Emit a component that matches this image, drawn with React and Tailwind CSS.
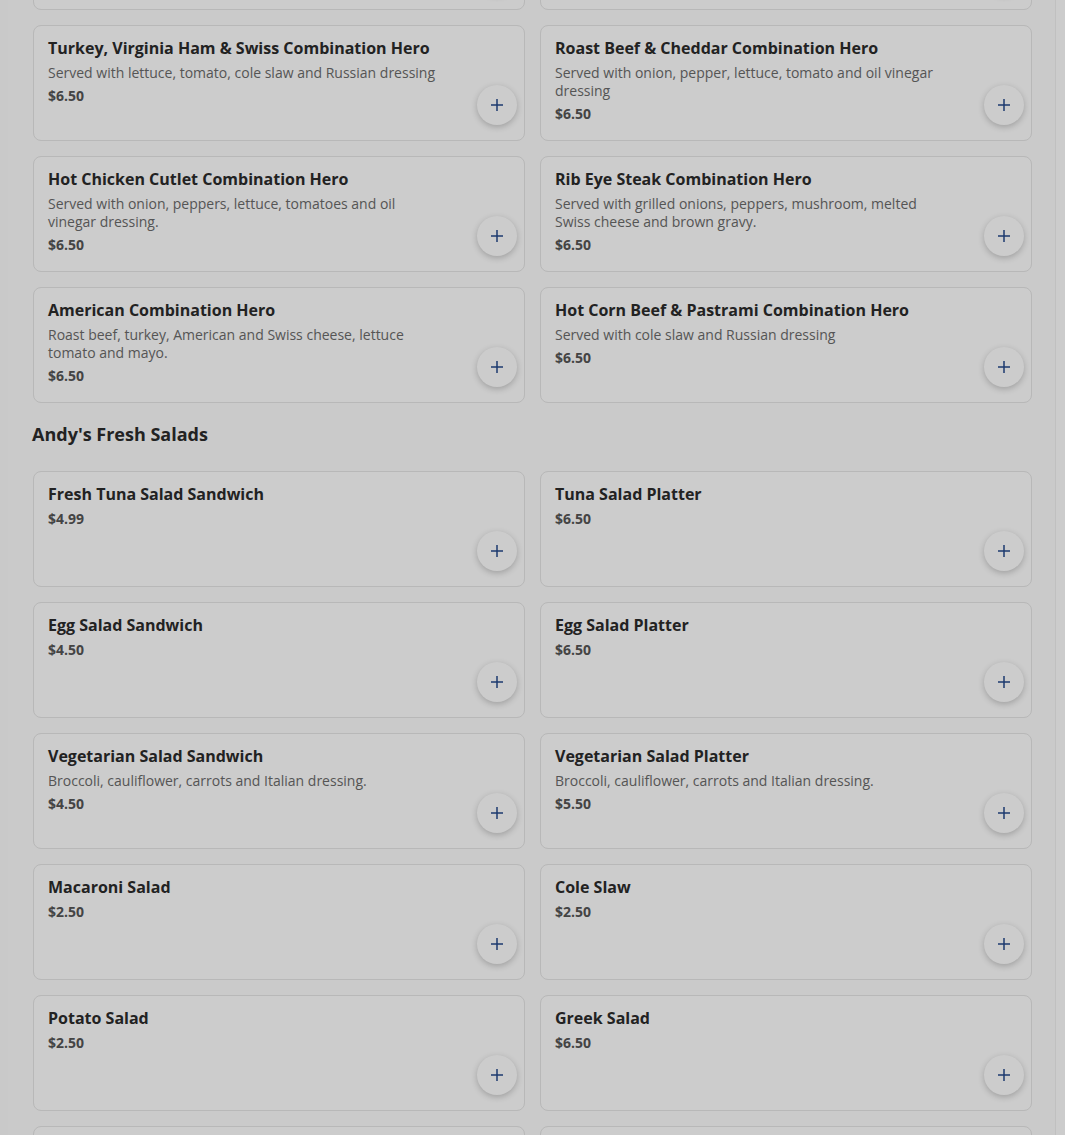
import React from "react";

const heroes = [
  { name: "Turkey, Virginia Ham & Swiss Combination Hero", desc: "Served with lettuce, tomato, cole slaw and Russian dressing", price: "$6.50" },
  { name: "Roast Beef & Cheddar Combination Hero", desc: "Served with onion, pepper, lettuce, tomato and oil vinegar dressing", price: "$6.50" },
  { name: "Hot Chicken Cutlet Combination Hero", desc: "Served with onion, peppers, lettuce, tomatoes and oil vinegar dressing.", price: "$6.50" },
  { name: "Rib Eye Steak Combination Hero", desc: "Served with grilled onions, peppers, mushroom, melted Swiss cheese and brown gravy.", price: "$6.50" },
  { name: "American Combination Hero", desc: "Roast beef, turkey, American and Swiss cheese, lettuce tomato and mayo.", price: "$6.50" },
  { name: "Hot Corn Beef & Pastrami Combination Hero", desc: "Served with cole slaw and Russian dressing", price: "$6.50" },
];

const salads = [
  { name: "Fresh Tuna Salad Sandwich", price: "$4.99" },
  { name: "Tuna Salad Platter", price: "$6.50" },
  { name: "Egg Salad Sandwich", price: "$4.50" },
  { name: "Egg Salad Platter", price: "$6.50" },
  { name: "Vegetarian Salad Sandwich", desc: "Broccoli, cauliflower, carrots and Italian dressing.", price: "$4.50" },
  { name: "Vegetarian Salad Platter", desc: "Broccoli, cauliflower, carrots and Italian dressing.", price: "$5.50" },
  { name: "Macaroni Salad", price: "$2.50" },
  { name: "Cole Slaw", price: "$2.50" },
  { name: "Potato Salad", price: "$2.50" },
  { name: "Greek Salad", price: "$6.50" },
  { name: "", price: "" },
  { name: "", price: "" },
];

function PlusButton() {
  return (
    <div className="absolute right-[7px] bottom-[15px] w-[40px] h-[40px] rounded-full bg-white shadow-[0_2px_6px_rgba(0,0,0,0.22)] flex items-center justify-center">
      <svg width="14" height="14" viewBox="0 0 14 14" fill="none">
        <path d="M7 1v12M1 7h12" stroke="#24498c" strokeWidth="1.5" />
      </svg>
    </div>
  );
}

function Card({ item }) {
  return (
    <div className="relative h-[116px] rounded-[8px] border border-[#e6e6e6] bg-white pl-[14px] pt-[9px]">
      {item.name && (
        <div className="max-w-[395px]">
          <div className="text-[16px] leading-[26px] font-bold text-[#2b2b2b]">{item.name}</div>
          {item.desc && (
            <div className="text-[14px] leading-[18px] text-[#6b6b6b] mt-[3px]">{item.desc}</div>
          )}
          <div className={`text-[14px] leading-[18px] font-bold text-[#555] ${item.desc ? "mt-[5px]" : "mt-[3px]"}`}>{item.price}</div>
        </div>
      )}
      <PlusButton />
    </div>
  );
}

export default function App() {
  return (
    <div className="relative w-[1065px] h-[1135px] overflow-hidden bg-white" style={{ fontFamily: '"Open Sans", "Noto Sans", sans-serif' }}>
      <div className="flex h-full">
        <div className="w-[8px] bg-[#fcfcfc] shrink-0" />
        <div className="flex-1 bg-[#fdfdfd]">
          <div className="ml-[25px] w-[999px] -mt-[106px]">
            <div className="grid grid-cols-2 gap-x-[15px] gap-y-[15px]">
              <Card item={{ name: "", price: "" }} />
              <Card item={{ name: "", price: "" }} />
              {heroes.map((h, i) => (
                <Card key={i} item={h} />
              ))}
            </div>
            <h2 className="-ml-[1px] mt-[19px] mb-[25px] text-[18px] leading-[24px] font-bold text-[#2b2b2b]">Andy's Fresh Salads</h2>
            <div className="grid grid-cols-2 gap-x-[15px] gap-y-[15px]">
              {salads.map((s, i) => (
                <Card key={i} item={s} />
              ))}
            </div>
          </div>
        </div>
        <div className="w-[10px] bg-[#ffffff] border-l border-[#f0f0f0] shrink-0" />
      </div>
      <div className="absolute inset-0 bg-black/20" />
    </div>
  );
}
